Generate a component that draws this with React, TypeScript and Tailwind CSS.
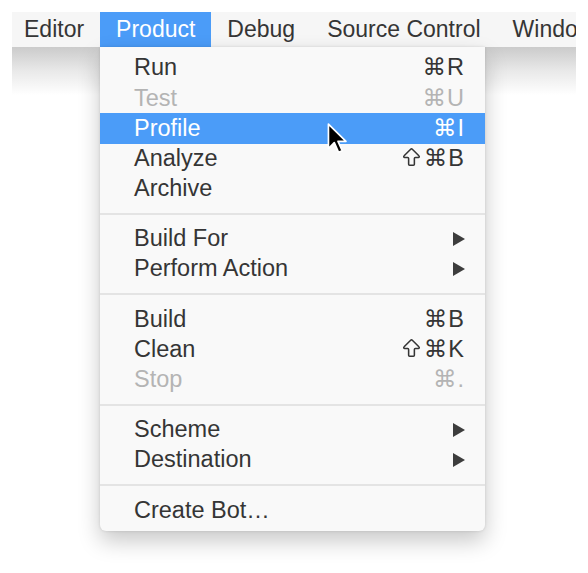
import { ArrowBigUp } from 'lucide-react';

type Item =
  | { kind: 'item'; label: string; shortcut?: string; shift?: boolean; disabled?: boolean; active?: boolean; submenu?: boolean }
  | { kind: 'sep' };

const items: Item[] = [
  { kind: 'item', label: 'Run', shortcut: '⌘R' },
  { kind: 'item', label: 'Test', shortcut: '⌘U', disabled: true },
  { kind: 'item', label: 'Profile', shortcut: '⌘I', active: true },
  { kind: 'item', label: 'Analyze', shortcut: '⌘B', shift: true },
  { kind: 'item', label: 'Archive' },
  { kind: 'sep' },
  { kind: 'item', label: 'Build For', submenu: true },
  { kind: 'item', label: 'Perform Action', submenu: true },
  { kind: 'sep' },
  { kind: 'item', label: 'Build', shortcut: '⌘B' },
  { kind: 'item', label: 'Clean', shortcut: '⌘K', shift: true },
  { kind: 'item', label: 'Stop', shortcut: '⌘.', disabled: true },
  { kind: 'sep' },
  { kind: 'item', label: 'Scheme', submenu: true },
  { kind: 'item', label: 'Destination', submenu: true },
  { kind: 'sep' },
  { kind: 'item', label: 'Create Bot…' },
];

const menus = ['Editor', 'Product', 'Debug', 'Source Control', 'Window'];

function Cursor() {
  return (
    <svg className="absolute left-[326px] top-[122px]" width="24" height="34" viewBox="0 0 22 32">
      <path
        d="M2 2 L2 25 L7.5 19.5 L11.5 28.5 L15 27 L11 18.2 L18.5 18.2 Z"
        fill="#000"
        stroke="#fff"
        strokeWidth="1.6"
        strokeLinejoin="round"
      />
    </svg>
  );
}

function SubArrow() {
  return (
    <svg width="12" height="14" viewBox="0 0 12 14">
      <path d="M0 0 L12 7 L0 14 Z" fill="#3d3d3d" />
    </svg>
  );
}

export default function App() {
  return (
    <div
      className="relative w-[588px] h-[573px] bg-white overflow-hidden text-[#353535]"
      style={{ fontFamily: '"Liberation Sans", "DejaVu Sans", Arial, sans-serif' }}
    >
      <div className="pt-3 px-3">
        <div className="flex h-[35px] bg-[#f6f6f6] overflow-hidden whitespace-nowrap">
          {menus.map((m, i) => (
            <div
              key={m}
              className={
                'flex items-center px-4 text-[23px] leading-none ' +
                (i === 0 ? '-ml-1 ' : '') +
                (m === 'Product' ? 'bg-[#4b9cf8] text-white' : '')
              }
            >
              {m}
            </div>
          ))}
        </div>
        <div className="h-[48px] bg-gradient-to-b from-[#cbcbcb] via-[#e9e9e9] to-white" />
      </div>

      <div className="absolute left-[100px] top-[47px] w-[385px] bg-[#f9f9f9] rounded-b-[6px] py-[6px] shadow-[0_10px_22px_rgba(0,0,0,0.22),0_0_3px_rgba(0,0,0,0.12)]">
        {items.map((it, i) =>
          it.kind === 'sep' ? (
            <div key={i} className="h-[20px] flex items-center">
              <div className="h-[2px] w-full bg-[#e4e4e4]" />
            </div>
          ) : (
            <div
              key={i}
              className={
                'h-[30.2px] flex items-center justify-between pl-[34px] pr-[20px] text-[23.5px] leading-none ' +
                (it.active ? 'bg-[#4b9cf8] text-white ' : '') +
                (it.disabled ? 'text-[#b4b4b4]' : '')
              }
            >
              <span>{it.label}</span>
              {it.shortcut && (
                <span className="flex items-center gap-[1px] tracking-[1px]">
                  {it.shift && <ArrowBigUp size={23} strokeWidth={1.6} className="-mt-[2px]" />}
                  {it.shortcut}
                </span>
              )}
              {it.submenu && <SubArrow />}
            </div>
          )
        )}
      </div>

      <Cursor />
    </div>
  );
}
